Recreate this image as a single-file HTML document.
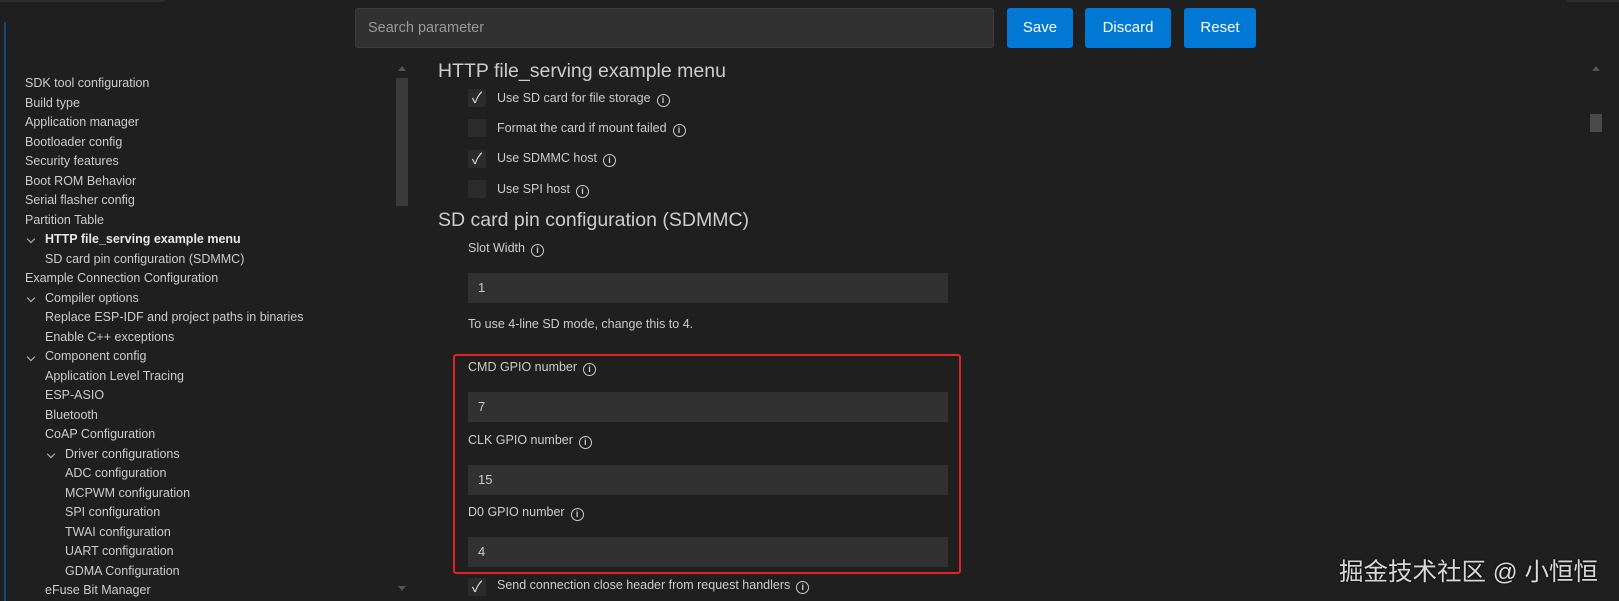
<!DOCTYPE html>
<html><head><meta charset="utf-8"><style>
*{margin:0;padding:0;box-sizing:border-box}
body{width:1619px;height:601px;background:#1f1f1f;overflow:hidden;position:relative;font-family:"Liberation Sans","Noto Sans CJK SC",sans-serif;color:#cccccc}
.a{position:absolute;white-space:nowrap}
.side{font-size:12.5px;color:#cccccc;line-height:19.5px}
.chev{position:absolute;width:6px;height:6px;border-right:1px solid #bbb;border-bottom:1px solid #bbb;transform:rotate(45deg)}
.cb{position:absolute;width:18px;height:18px;background:#2b2b2b;border-radius:2px;color:#ddd;font-size:15px;line-height:20px;text-align:center}
.lab{font-size:12.5px;color:#cccccc}
.i{display:inline-block;width:13px;height:13px;border:1px solid #ccc;border-radius:50%;font-size:9px;line-height:11px;text-align:center;margin-left:6px;vertical-align:-1px;font-weight:bold}
.inp{position:absolute;left:468px;width:480px;height:30px;background:#313131;font-size:13px;line-height:30px;padding-left:10px;color:#ccc}
.btn{position:absolute;top:8px;height:40px;background:#0078d4;border-radius:3px;color:#fff;font-size:15px;line-height:40px;text-align:center}
h2{position:absolute;font-weight:normal;font-size:19.5px;color:#cccccc;white-space:nowrap;left:438px}
</style></head><body>
<div class="a" style="left:0;top:0;width:165px;height:2px;background:#2c2c2c"></div>
<div class="a" style="left:4px;top:22px;width:2px;height:579px;background:#0e4d7a"></div>
<div class="a" style="left:355px;top:8px;width:639px;height:40px;background:#313131;border:1px solid #3c3c3c;border-radius:3px;font-size:14.5px;line-height:38px;padding-left:12px;color:#9a9a9a">Search parameter</div>
<div class="btn" style="left:1007px;width:66px">Save</div>
<div class="btn" style="left:1085px;width:86px">Discard</div>
<div class="btn" style="left:1184px;width:72px">Reset</div>

<div class="a side" style="left:25px;top:74px">
SDK tool configuration<br>Build type<br>Application manager<br>Bootloader config<br>Security features<br>Boot ROM Behavior<br>Serial flasher config<br>Partition Table<br>
<span style="margin-left:20px;font-weight:bold;color:#e6e6e6">HTTP file_serving example menu</span><br>
<span style="margin-left:20px">SD card pin configuration (SDMMC)</span><br>
Example Connection Configuration<br>
<span style="margin-left:20px">Compiler options</span><br>
<span style="margin-left:20px">Replace ESP-IDF and project paths in binaries</span><br>
<span style="margin-left:20px">Enable C++ exceptions</span><br>
<span style="margin-left:20px">Component config</span><br>
<span style="margin-left:20px">Application Level Tracing</span><br>
<span style="margin-left:20px">ESP-ASIO</span><br>
<span style="margin-left:20px">Bluetooth</span><br>
<span style="margin-left:20px">CoAP Configuration</span><br>
<span style="margin-left:40px">Driver configurations</span><br>
<span style="margin-left:40px">ADC configuration</span><br>
<span style="margin-left:40px">MCPWM configuration</span><br>
<span style="margin-left:40px">SPI configuration</span><br>
<span style="margin-left:40px">TWAI configuration</span><br>
<span style="margin-left:40px">UART configuration</span><br>
<span style="margin-left:40px">GDMA Configuration</span><br>
<span style="margin-left:20px">eFuse Bit Manager</span>
</div>
<div class="chev" style="left:28px;top:236px"></div>
<div class="chev" style="left:28px;top:295px"></div>
<div class="chev" style="left:28px;top:354px"></div>
<div class="chev" style="left:48px;top:451px"></div>

<div class="a" style="left:396px;top:78px;width:12px;height:128px;background:#3a3a3a"></div>
<div class="a" style="left:398px;top:66px;width:0;height:0;border:4px solid transparent;border-bottom:5px solid #555;border-top:0"></div>
<div class="a" style="left:398px;top:586px;width:0;height:0;border:4px solid transparent;border-top:5px solid #555;border-bottom:0"></div>

<h2 style="top:60px">HTTP file_serving example menu</h2>
<div class="cb" style="left:468px;top:89px">✓</div><div class="a lab" style="left:497px;top:91px">Use SD card for file storage<span class="i">i</span></div>
<div class="cb" style="left:468px;top:119px"></div><div class="a lab" style="left:497px;top:121px">Format the card if mount failed<span class="i">i</span></div>
<div class="cb" style="left:468px;top:150px">✓</div><div class="a lab" style="left:497px;top:151px">Use SDMMC host<span class="i">i</span></div>
<div class="cb" style="left:468px;top:180px"></div><div class="a lab" style="left:497px;top:182px">Use SPI host<span class="i">i</span></div>
<h2 style="top:209px">SD card pin configuration (SDMMC)</h2>
<div class="a lab" style="left:468px;top:241px">Slot Width<span class="i">i</span></div>
<div class="inp" style="top:273px">1</div>
<div class="a lab" style="left:468px;top:317px">To use 4-line SD mode, change this to 4.</div>
<div class="a" style="left:453px;top:354px;width:508px;height:220px;border:2px solid #e02424;border-radius:3px"></div>
<div class="a lab" style="left:468px;top:360px">CMD GPIO number<span class="i">i</span></div>
<div class="inp" style="top:392px">7</div>
<div class="a lab" style="left:468px;top:433px">CLK GPIO number<span class="i">i</span></div>
<div class="inp" style="top:465px">15</div>
<div class="a lab" style="left:468px;top:505px">D0 GPIO number<span class="i">i</span></div>
<div class="inp" style="top:537px">4</div>
<div class="cb" style="left:468px;top:578px">✓</div><div class="a lab" style="left:497px;top:578px">Send connection close header from request handlers<span class="i">i</span></div>

<div class="a" style="left:1590px;top:114px;width:12px;height:18px;background:#4a4a4a"></div>
<div class="a" style="left:1592px;top:66px;width:0;height:0;border:4px solid transparent;border-bottom:5px solid #555;border-top:0"></div>
<div class="a" style="left:1567px;top:0;width:52px;height:2px;background:#2c2c2c"></div>
<div class="a" style="left:1339px;top:553px;font-size:24.5px;color:#d8d8d8;text-shadow:0 0 2px #000">掘金技术社区 @ 小恒恒</div>
</body></html>
